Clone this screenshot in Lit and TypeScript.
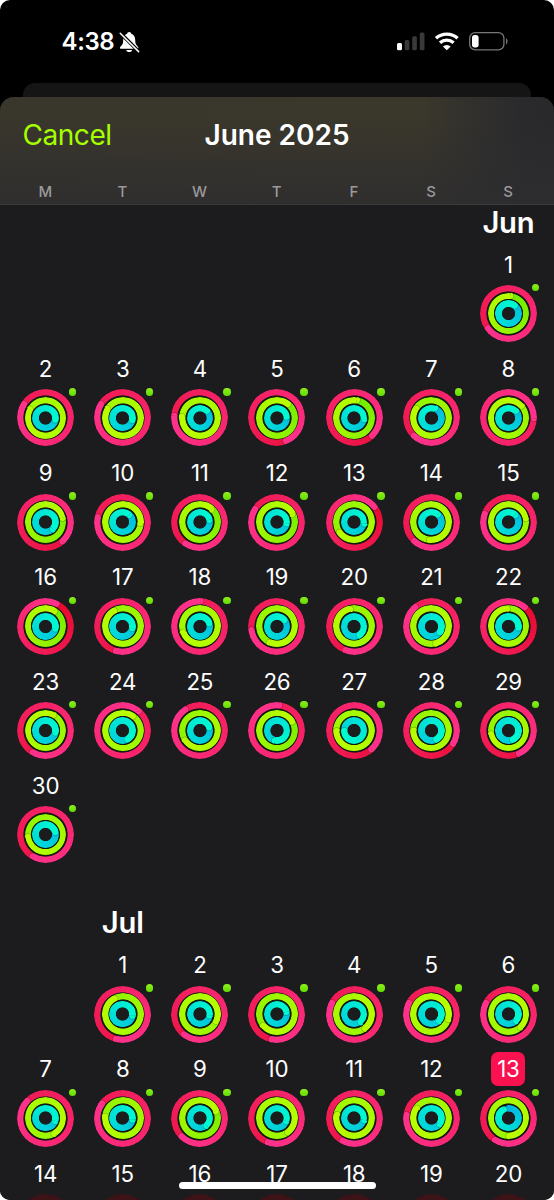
import { LitElement, html, css, svg, nothing } from "lit";
import { customElement, property } from "lit/decorators.js";
import { styleMap } from "lit/directives/style-map.js";

type Rgb = [number, number, number];
/** Head angle in degrees and the number of laps completed before it. */
type Lap = [angle: number, laps: number];

interface Day {
  n: number;
  rings?: [Lap, Lap, Lap];
  today?: boolean;
}

const PALETTE: { from: Rgb; to: Rgb }[] = [
  { from: [228, 6, 36], to: [255, 50, 140] },
  { from: [112, 236, 0], to: [186, 255, 0] },
  { from: [0, 182, 226], to: [0, 252, 208] },
];
const KIND = ["move", "exercise", "stand"];
const RADIUS = [25.3, 17.7, 10.1];

const mix = (a: Rgb, b: Rgb, t: number) =>
  `rgb(${a.map((v, i) => Math.round(v + (b[i] - v) * t)).join(",")})`;

const day = (n: number, m: number, e: number, s: number, lm = 1, le = 1, ls = 1): Day => ({
  n,
  rings: [[m, lm], [e, le], [s, ls]],
});

const JUNE: Day[] = [
  day(1, 234, 6, 38),
  day(2, 302, 298, 102, 1, 3), day(3, 302, 300, 105, 1, 3), day(4, 274, 272, 48, 1, 3),
  day(5, 158, 40, 85), day(6, 136, 8, 100), day(7, 224, 300, 22), day(8, 92, 48, 48, 2, 2),
  day(9, 138, 75, 132), day(10, 282, 92, 42, 1, 3), day(11, 214, 42, 75), day(12, 302, 62, 95),
  day(13, 52, 236, 97), day(14, 223, 185, 38, 1, 2), day(15, 290, 76, 42, 1, 2),
  day(16, 26, 30, 102), day(17, 195, 332, 100), day(18, 2, 250, 72, 2, 2), day(19, 262, 203, 52),
  day(20, 201, 346, 150), day(21, 320, 165, 125, 1, 2), day(22, 40, 355, 97),
  day(23, 210, 27, 102, 1, 2), day(24, 40, 36, 150, 2, 2), day(25, 326, 236, 72),
  day(26, 6, 60, 190, 2), day(27, 138, 268, 268, 1, 2), day(28, 121, 270, 152),
  day(29, 156, 258, 155), day(30, 210, 262, 76),
];

const JULY: Day[] = [
  day(1, 195, 333, 97), day(2, 218, 112, 95, 1, 2), day(3, 191, 230, 75), day(4, 297, 143, 140, 1, 2),
  day(5, 297, 106, 130, 1, 3), day(6, 297, 136, 130, 1, 2),
  day(7, 314, 150, 105, 1, 2), day(8, 306, 276, 97), day(9, 225, 66, 136), day(10, 200, 140, 105, 1, 2),
  day(11, 208, 282, 100, 1, 2), day(12, 278, 304, 125, 1, 2),
  { ...day(13, 212, 178, 332, 1, 2, 0), today: true },
  ...[14, 15, 16, 17, 18, 19, 20].map((n) => ({ n })),
];

@customElement("activity-rings")
class ActivityRings extends LitElement {
  @property({ attribute: false }) rings?: [Lap, Lap, Lap];

  static styles = css`
    :host { display: grid; width: 57px; height: 57px; place-items: center; }
    .hole, .core, .ring, .marks { grid-area: 1 / 1; }
    .hole { width: 45px; height: 45px; border-radius: 50%; background: #131a10; }
    .core { width: 14px; height: 14px; border-radius: 50%; background: #1a1c1e; }
    .ring { border-radius: 50%; }
    .move { width: 57px; height: 57px; --in: 22.1px; }
    .exercise { width: 41.6px; height: 41.6px; --in: 14.6px; }
    .stand { width: 26.6px; height: 26.6px; --in: 6.6px; }
    .ring { mask-image: radial-gradient(circle, transparent calc(var(--in) - 0.4px), #000 calc(var(--in) + 0.4px)); }
    .marks { width: 57px; height: 57px; z-index: 1; }
    .empty { background: #3d1318; }
    .empty.exercise { background: #1d3305; }
    .empty.stand { background: #06302f; }
  `;

  private fill([angle, laps]: Lap, i: number) {
    const { from, to } = PALETTE[i];
    if (laps === 0) {
      return `conic-gradient(${mix(from, to, 0)} 0deg, ${mix(from, to, 1)} ${angle}deg, #05292d ${angle}deg)`;
    }
    const start = (360 * (laps - 1) + angle) / (360 * laps + angle);
    return `conic-gradient(from ${angle}deg, ${mix(from, to, start)}, ${mix(from, to, 1)})`;
  }

  private mark([angle, laps]: Lap, i: number) {
    const { from, to } = PALETTE[i];
    const r = RADIUS[i];
    const w = 3.1;
    const top = 28.5 - r;
    const edge = `M28.5 ${top - w}A${w} ${w} 0 0 1 28.5 ${top + w}`;
    return svg`
      ${laps === 0
        ? svg`<circle cx="28.5" cy=${top} r=${w} fill=${mix(from, to, 0)} />`
        : nothing}
      <g transform="rotate(${angle} 28.5 28.5)">
        <path d=${edge} fill="none" stroke="#000" stroke-opacity=".25" stroke-width="1.3" />
        <path d="${edge}Z" fill=${mix(from, to, 1)} />
      </g>`;
  }

  render() {
    const rings = this.rings;
    if (!rings) {
      return html`${KIND.map((k) => html`<div class="ring empty ${k}"></div>`)}`;
    }
    return html`
      <div class="hole"></div>
      <div class="core"></div>
      ${rings.map((lap, i) => html`
        <div class="ring ${KIND[i]}" style=${styleMap({ background: this.fill(lap, i) })}></div>`)}
      <svg class="marks" viewBox="0 0 57 57">${rings.map((lap, i) => this.mark(lap, i))}</svg>`;
  }
}

@customElement("month-section")
class MonthSection extends LitElement {
  @property() label = "";
  @property({ type: Number }) offset = 0;
  @property({ attribute: false }) days: Day[] = [];

  static styles = css`
    :host { display: block; }
    .grid, .title { display: grid; grid-template-columns: repeat(7, 1fr); padding: 0 7px; }
    .grid { grid-auto-rows: 104.2px; }
    .title { height: 42.4px; }
    .name { display: flex; justify-content: center; font-size: 29.2px; line-height: 35.6px; font-weight: 600;
      letter-spacing: -0.2px; white-space: nowrap; }
    .cell { display: flex; flex-direction: column; align-items: center; }
    .num { display: flex; align-items: center; justify-content: center; width: 34px; height: 34px;
      border-radius: 7px; font-size: 22.3px; font-weight: 400; letter-spacing: -0.2px; margin-bottom: 3.8px; }
    .today { background: #fa114f; }
    .wrap { position: relative; }
    .dot { position: absolute; right: -2.2px; top: -1.1px; width: 7.4px; height: 7.4px; border-radius: 50%;
      background: linear-gradient(#8ff01c, #62dc00); }
  `;

  render() {
    return html`
      <div class="title">
        <div class="name" style=${styleMap({ gridColumn: String(this.offset + 1) })}>${this.label}</div>
      </div>
      <div class="grid">
        ${this.days.map((d, i) => html`
          <div class="cell" style=${i === 0 ? styleMap({ gridColumn: String(this.offset + 1) }) : nothing}>
            <div class="num ${d.today ? "today" : ""}">${d.n}</div>
            <div class="wrap">
              <activity-rings .rings=${d.rings}></activity-rings>
              ${d.rings ? html`<div class="dot"></div>` : nothing}
            </div>
          </div>`)}
      </div>`;
  }
}

@customElement("app-root")
class AppRoot extends LitElement {
  static styles = css`
    :host { display: block; width: 554px; height: 1200px; background: #fff; color: #fff;
      font-family: Inter, "Liberation Sans", sans-serif; overflow: hidden; }
    .screen { position: relative; display: flex; flex-direction: column; height: 1200px; overflow: hidden;
      border-radius: 10px; background: #000; }
    .status { display: flex; justify-content: space-between; height: 83px; flex: none; box-sizing: border-box;
      padding: 27px 46px 0 61.5px; }
    .clock { display: flex; gap: 3.5px; height: 29px; align-items: center; font-size: 24px; font-weight: 600; }
    .clock span { width: 53.5px; letter-spacing: -0.35px; }
    .icons { display: block; width: 112px; height: 29px; }
    .bell { width: 21px; height: 22px; }
    .behind { height: 14px; flex: none; margin: 0 23px; border-radius: 12px 12px 0 0; background: #151516; }
    .sheet { display: flex; flex-direction: column; flex: 1; min-height: 0; overflow: hidden;
      border-radius: 14px 14px 0 0; background: #1c1c1e; }
    .head { flex: none; height: 108px; box-sizing: border-box; border-bottom: 1px solid #3b3a3a;
      background:
        linear-gradient(to bottom, transparent 20%, rgba(46, 45, 47, 0.85) 100%),
        linear-gradient(to right, #39362c 0%, #3a372b 76%, #302f2d 87%, #2a2a2d 94%, #29292c 100%); }
    .bar { display: grid; grid-template-columns: 1fr auto 1fr; align-items: center; height: 76px; padding: 0 22.5px; }
    .cancel { color: #a6ff00; font-size: 28px; letter-spacing: -0.45px; }
    .month { font-size: 28px; font-weight: 600; }
    .week { display: grid; grid-template-columns: repeat(7, 1fr); padding: 0 7.3px 0 6.7px; text-align: center;
      font-size: 15px; line-height: 18px; margin-top: 9.6px; font-weight: 500; color: #9a999b; }
    .scroll { display: flex; flex-direction: column; gap: 32.8px; height: 995px; overflow: hidden; }
    .home { position: absolute; left: 178.5px; bottom: 11px; width: 197.5px; height: 7.4px; border-radius: 4px; background: #fff; }
  `;

  render() {
    return html`
      <div class="screen">
        <div class="status">
          <div class="clock">
            <span>4:38</span>
            <svg class="bell" viewBox="0 0 21 22">
              <path fill="#fff" d="M10.2 1C9 1 8.3 1.800 8.100 2.700 5.200 3.700 4.200 6.300 4.200 9c0 3.300-.7 4.500-1.900 5.800C1.500 15.700 1 16.200 1 16.900c0 .6.4.9 1 .9h16.400c.6 0 1-.3 1-.9 0-.7-.5-1.200-1.300-2.100-1.200-1.300-1.900-2.500-1.900-5.800 0-2.700-1-5.300-3.900-6.300C12.100 1.800 11.400 1 10.200 1ZM7.200 18.900c.4 1.300 1.500 2.100 3 2.100s2.600-.8 3-2.100Z" />
              <path d="M.5 1.200 19.800 20.500" stroke="#000" stroke-width="3.600" />
              <path d="M1.200 2.200 19.600 20.600" stroke="#fff" stroke-width="1.500" stroke-linecap="round" />
            </svg>
          </div>
          <svg class="icons" viewBox="396 27 112 29">
            <rect x="397" y="43" width="5" height="7.200" rx="1.500" fill="#fff" />
            <g fill="#39393a">
              <rect x="404.700" y="40" width="4.700" height="10.200" rx="1.500" />
              <rect x="412.200" y="36.200" width="4.700" height="14" rx="1.500" />
              <rect x="419.800" y="32.500" width="4.700" height="17.700" rx="1.500" />
            </g>
            <g fill="none" stroke="#fff" stroke-width="3.300">
              <path d="M436 38.300a16 16 0 0 1 21.600 0" />
              <path d="M440 42.700a10 10 0 0 1 13.600 0" />
            </g>
            <path d="M446.800 50.300 442.900 46.400a5.800 5.800 0 0 1 7.800 0Z" fill="#fff" />
            <rect x="469.700" y="32.600" width="34.200" height="17.300" rx="5.500" fill="none" stroke="#777" stroke-width="1.300" />
            <rect x="472" y="35" width="6.600" height="12.500" rx="2.700" fill="#fff" />
            <path d="M506 38.200c2 .8 2 5.400 0 6.200Z" fill="#777" />
          </svg>
        </div>
        <div class="behind"></div>
        <div class="sheet">
          <div class="head">
            <div class="bar">
              <span class="cancel">Cancel</span>
              <span class="month">June 2025</span>
            </div>
            <div class="week">
              ${["M", "T", "W", "T", "F", "S", "S"].map((d) => html`<span>${d}</span>`)}
            </div>
          </div>
          <div class="scroll">
            <month-section label="Jun" .offset=${6} .days=${JUNE}></month-section>
            <month-section label="Jul" .offset=${1} .days=${JULY}></month-section>
          </div>
        </div>
        <div class="home"></div>
      </div>`;
  }
}
